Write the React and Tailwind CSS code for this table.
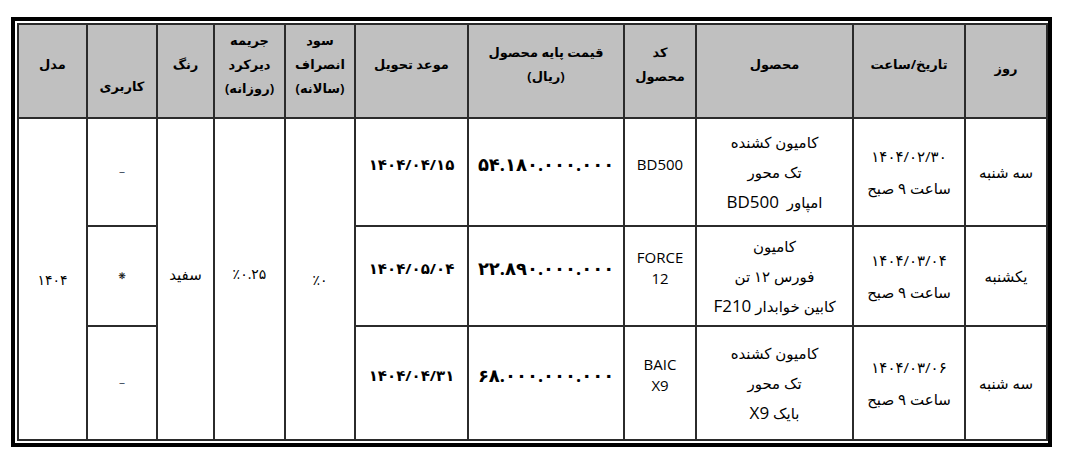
const rows = [
  {
    day: "سه شنبه",
    date: "۱۴۰۴/۰۲/۳۰",
    product: ["کامیون کشنده", "تک محور", ["امپاور  ", "BD500"]],
    code: ["BD500"],
    price: "۵۴.۱۸۰.۰۰۰.۰۰۰",
    delivery: "۱۴۰۴/۰۴/۱۵",
    usage: "–",
    h: "h-[108px]",
  },
  {
    day: "یکشنبه",
    date: "۱۴۰۴/۰۳/۰۴",
    product: ["کامیون", "فورس ۱۲ تن", ["کابین خوابدار ", "F210"]],
    code: ["FORCE", "12"],
    price: "۲۲.۸۹۰.۰۰۰.۰۰۰",
    delivery: "۱۴۰۴/۰۵/۰۴",
    usage: "❋",
    h: "h-[100px]",
  },
  {
    day: "سه شنبه",
    date: "۱۴۰۴/۰۳/۰۶",
    product: ["کامیون کشنده", "تک محور", ["بایک ", "X9"]],
    code: ["BAIC", "X9"],
    price: "۶۸.۰۰۰.۰۰۰.۰۰۰",
    delivery: "۱۴۰۴/۰۴/۳۱",
    usage: "–",
    h: "h-[114px]",
  },
]

const cell = "border-2 border-[#2b2b2b] text-center align-middle p-0"
const head = "border-2 border-[#2b2b2b] bg-[#c0c0c0] text-center align-middle font-bold text-[13px] leading-[24px] p-0"

const App = () => {
  return (
    <div className="w-[1067px] h-[465px] bg-white pt-[17px] pl-[11px] font-['Open_Sans','DejaVu_Sans',sans-serif] text-black">
      <div className="w-[1041px] border-4 border-black p-[2px]">
        <table dir="rtl" className="w-[1029px] table-fixed border-collapse">
          <colgroup>
            <col className="w-[82px]" />
            <col className="w-[112px]" />
            <col className="w-[157px]" />
            <col className="w-[72px]" />
            <col className="w-[156px]" />
            <col className="w-[113px]" />
            <col className="w-[70px]" />
            <col className="w-[71px]" />
            <col className="w-[57px]" />
            <col className="w-[70px]" />
            <col className="w-[69px]" />
          </colgroup>
          <thead>
            <tr className="h-[94px]">
              <th className={head + " pb-[6px]"}>روز</th>
              <th className={head + " pb-[14px]"}>تاریخ/ساعت</th>
              <th className={head + " pb-[14px]"}>محصول</th>
              <th className={head + " pb-[14px]"}>کد<br />محصول</th>
              <th className={head + " pb-[14px]"}>قیمت پایه محصول<br />(ریال)</th>
              <th className={head + " pb-[14px]"}>موعد تحویل</th>
              <th className={head + " pb-[14px]"}>سود<br />انصراف<br />(سالانه)</th>
              <th className={head + " pb-[14px]"}>جریمه<br />دیرکرد<br />(روزانه)</th>
              <th className={head + " pb-[14px]"}>رنگ</th>
              <th className={head + " pt-[30px]"}>کاربری</th>
              <th className={head + " pb-[14px]"}>مدل</th>
            </tr>
          </thead>
          <tbody>
            {rows.map((row, i) => (
              <tr key={i} className={row.h}>
                <td className={cell + " text-[15px]"}>{row.day}</td>
                <td className={cell + " text-[15px] leading-[32px]"}>
                  <div>{row.date}</div>
                  <div>ساعت ۹ صبح</div>
                </td>
                <td className={cell + " text-[15px] leading-[30px]"}>
                  {row.product.map((line, j) =>
                    Array.isArray(line) ? (
                      <div key={j} className="whitespace-pre">
                        {line[0]}
                        <span className="text-[17px] font-medium">{line[1]}</span>
                      </div>
                    ) : (
                      <div key={j}>{line}</div>
                    )
                  )}
                </td>
                <td className={cell + " text-[15px] leading-[21px] pb-[16px]"}>
                  {row.code.map((line, j) => (
                    <div key={j}>{line}</div>
                  ))}
                </td>
                <td className={cell + " text-[18px] font-bold tracking-[-2.5px] pb-[16px]"}>{row.price}</td>
                <td className={cell + " text-[15px] font-bold pb-[16px]"}>{row.delivery}</td>
                {i === 0 && (
                  <>
                    <td rowSpan={3} className={cell + " text-[14px]"}>
                      <span dir="ltr">٪۰</span>
                    </td>
                    <td rowSpan={3} className={cell + " text-[14px] pb-[12px]"}>
                      <span dir="ltr">٪۰.۲۵</span>
                    </td>
                    <td rowSpan={3} className={cell + " text-[15px] pb-[10px]"}>سفید</td>
                  </>
                )}
                <td className={cell + (row.usage === "–" ? " text-[12px] text-gray-600" : " text-[9px]")}>{row.usage}</td>
                {i === 0 && (
                  <td rowSpan={3} className={cell + " text-[14px]"}>۱۴۰۴</td>
                )}
              </tr>
            ))}
          </tbody>
        </table>
      </div>
    </div>
  )
}

export default App
